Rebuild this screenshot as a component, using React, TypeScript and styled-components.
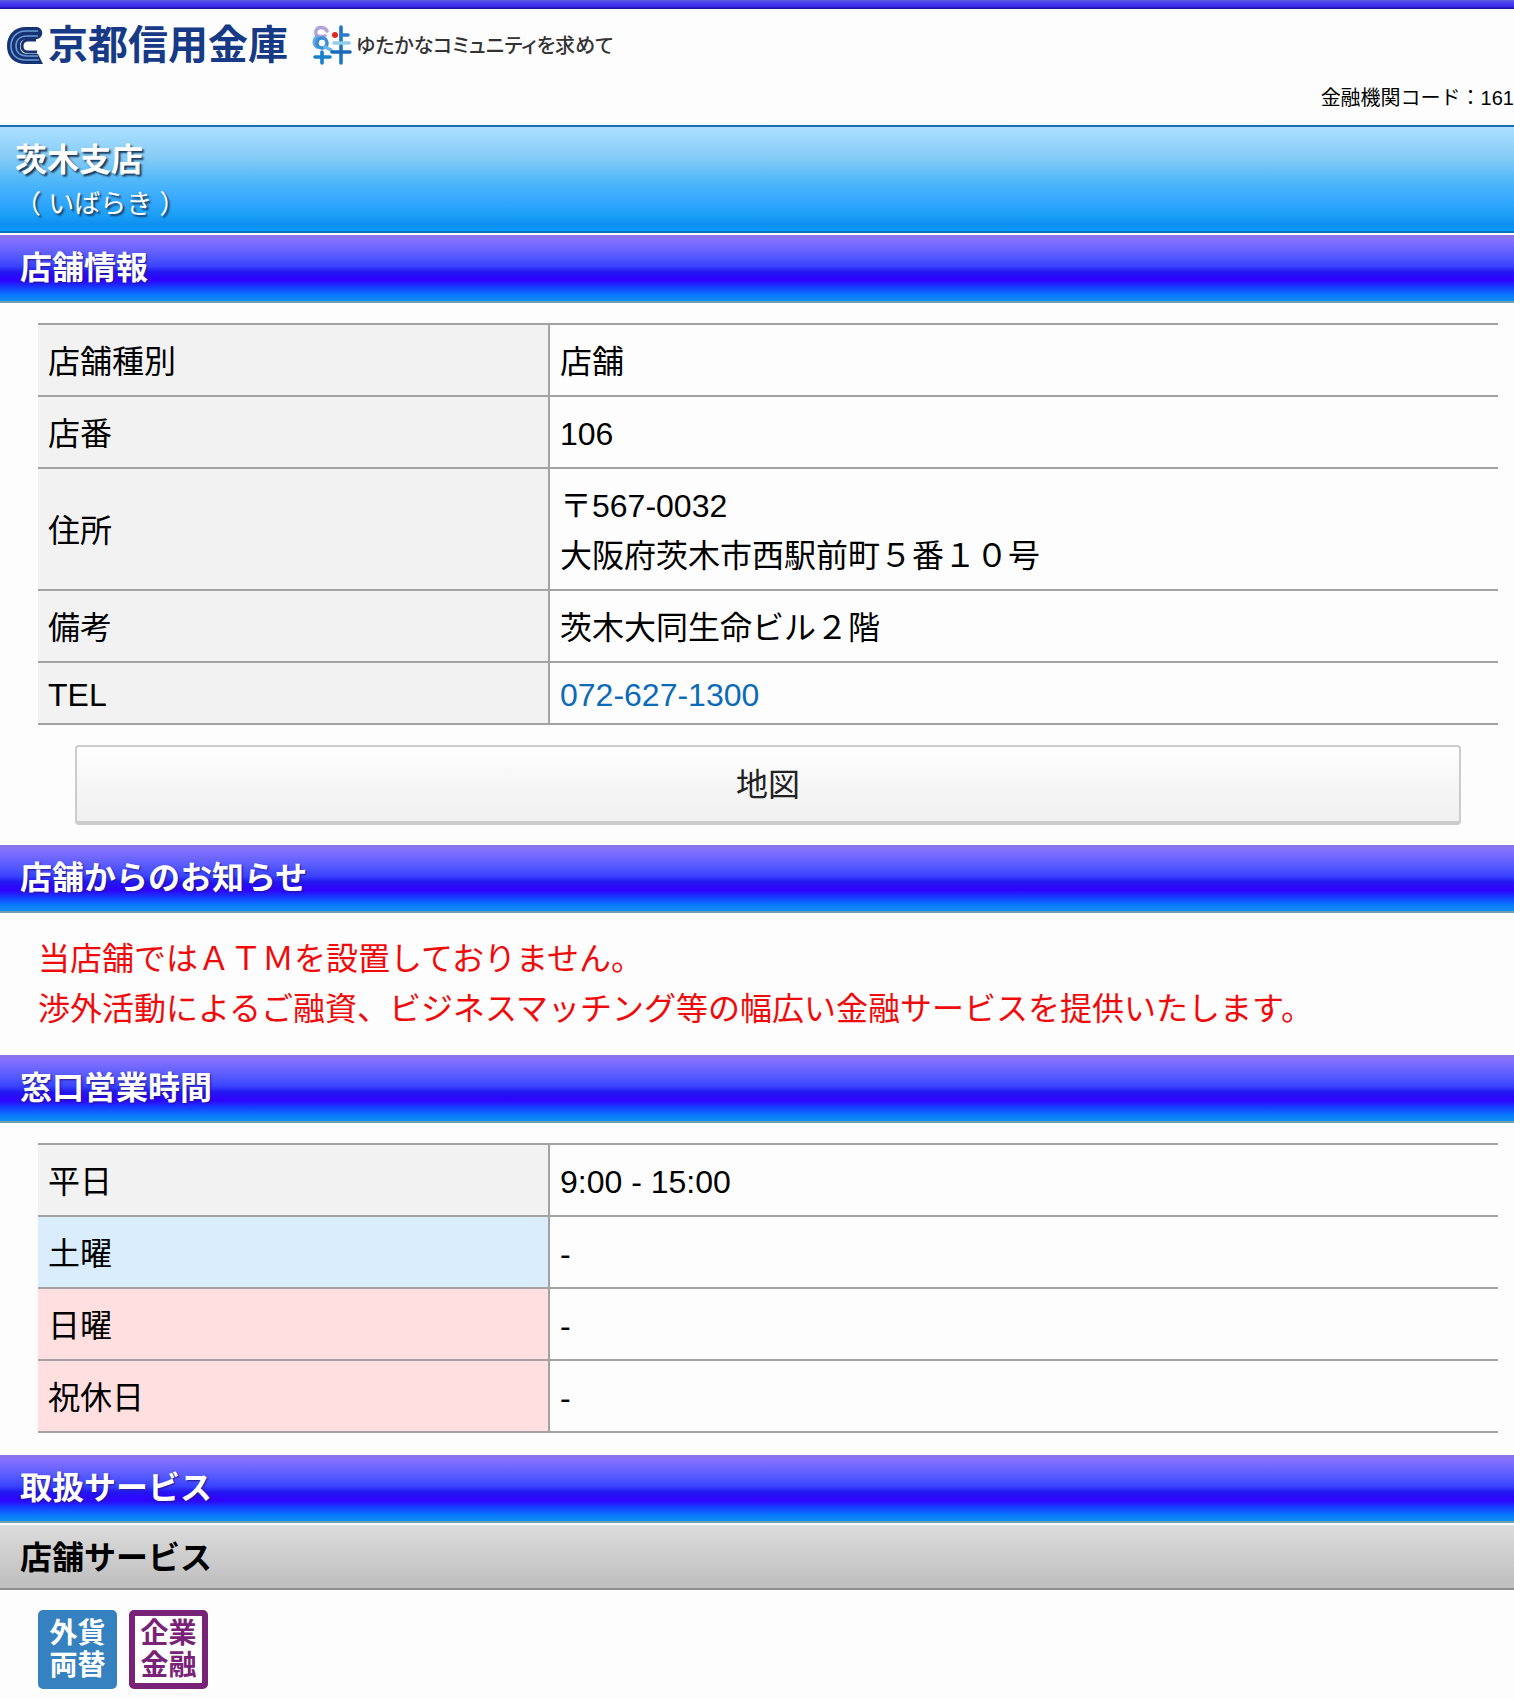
import React from "react";
import styled, { createGlobalStyle } from "styled-components";

const GlobalStyle = createGlobalStyle`
  *, *::before, *::after { box-sizing: border-box; }
  body {
    margin: 0;
    background: #fdfdfd;
    color: #000;
    font-family: "Liberation Sans", "Noto Sans CJK JP", sans-serif;
    font-size: 32px;
    line-height: 50px;
    overflow-x: hidden;
  }
`;

const TopStripe = styled.div`
  height: 9px;
  background: linear-gradient(#5a62d8, #4a3cf0 35%, #3c2cf0 70%, #1c0c96);
`;

const Header = styled.header`
  display: flex;
  flex-direction: column;
  padding-top: 12px;
`;

const Brand = styled.div`
  display: flex;
  align-items: center;
  height: 48px;
  padding-left: 6px;
`;

const BankMark = styled.svg`
  width: 38px;
  height: 40px;
  margin-right: 4px;
`;

const BankName = styled.span`
  color: #173a86;
  font-size: 40px;
  font-weight: 700;
`;

const KizunaMark = styled.svg`
  width: 40px;
  height: 40px;
  margin: 0 4px 0 24px;
`;

const Slogan = styled.span`
  padding-top: 2px;
  color: #333;
  font-size: 20px;
  font-weight: 500;
  font-feature-settings: "palt";
`;

const BankCode = styled.p`
  margin: 0;
  padding: 14px 0 12px;
  font-size: 20px;
  line-height: 30px;
  text-align: right;
  white-space: nowrap;
`;

const BranchBanner = styled.div`
  height: 108px;
  padding: 9px 15px 0;
  border-top: 2px solid #1d6bb0;
  border-bottom: 2px solid #0b74c0;
  background: linear-gradient(#ade0ff, #84cbf6 30%, #50b8f8 52%, #3aaaff 68%, #1a9ff5 85%, #0e8ff0 94%, #0098ff);
  color: #fff;
  text-shadow: 2px 2px 2px #1a3a5c;
`;

const BranchName = styled.h1`
  margin: 0;
  font-size: 32px;
  line-height: 48px;
`;

const BranchKana = styled.p`
  margin: 0;
  font-size: 26px;
  line-height: 40px;
`;

const SectionTitle = styled.h2<{ $spaced?: boolean }>`
  height: 68px;
  margin: ${(p) => (p.$spaced ? 20 : 2)}px 0 0;
  padding: 8px 20px 0;
  border-bottom: 2px solid #6f9fb4;
  background: linear-gradient(#8c78e0, #8470ff 8%, #5a5cff 30%, #3a44ff 47%, #2218f0 56%, #3000ff 68%, #1440ff 80%, #0a78ff 91%, #1090f0);
  color: #fff;
  font-size: 32px;
  line-height: 50px;
  text-shadow: 1px 1px 2px #22168c;
`;

const SubTitle = styled.h3`
  height: 65px;
  margin: 2px 0 0;
  padding: 8px 20px 0;
  border-bottom: 2px solid #909090;
  background: linear-gradient(#dcdcdc, #bebebe);
  font-size: 32px;
  line-height: 50px;
`;

const Panel = styled.section<{ $bottom?: number }>`
  padding: 20px 16px ${(p) => p.$bottom ?? 0}px 38px;
`;

const InfoTable = styled.table`
  width: 100%;
  table-layout: fixed;
  border-collapse: collapse;
`;

const Row = styled.tr<{ $compact?: boolean }>`
  line-height: ${(p) => (p.$compact ? 40 : 50)}px;
  border-top: 2px solid #a3a3a3;
  border-bottom: 2px solid #a3a3a3;
`;

const tones = { plain: "#f2f2f2", saturday: "#d9edfc", holiday: "#ffdfdf" };

const HeadCell = styled.th<{ $tone: keyof typeof tones }>`
  width: 35%;
  padding: 12px 10px 8px;
  border-right: 2px solid #a3a3a3;
  background: ${(p) => tones[p.$tone]};
  font-weight: 400;
  text-align: left;
`;

const DataCell = styled.td`
  padding: 12px 10px 8px;
`;

const PhoneLink = styled.a`
  color: #0b6bb8;
  text-decoration: none;
`;

const MapButton = styled.button`
  display: block;
  width: calc(100% - 74px);
  height: 80px;
  margin: 20px 37px 0;
  padding: 2px 0 0;
  border: 2px solid #ccc;
  border-bottom-width: 4px;
  border-radius: 4px;
  background: linear-gradient(#fff, #f7f7f7 45%, #f0f0f0);
  color: #222;
  font: inherit;
`;

const Notice = styled.p`
  margin: 0;
  padding: 21px 16px 1px 38px;
  color: #f00b0b;
`;

const Badges = styled.ul`
  display: flex;
  gap: 12px;
  margin: 0;
  padding: 20px 38px 10px;
  list-style: none;
`;

const Badge = styled.li<{ $outlined?: boolean }>`
  display: flex;
  flex-direction: column;
  align-items: center;
  justify-content: center;
  width: 79px;
  height: 79px;
  border: 6px solid ${(p) => (p.$outlined ? "#792378" : "#3682c0")};
  border-radius: 5px;
  background: ${(p) => (p.$outlined ? "#fff" : "#3682c0")};
  color: ${(p) => (p.$outlined ? "#792378" : "#fff")};
  font-size: 28px;
  font-weight: 700;
  line-height: 32px;
`;

type Entry = {
  label: string;
  value: React.ReactNode;
  tone?: keyof typeof tones;
  compact?: boolean;
};

const branchInfo: Entry[] = [
  { label: "店舗種別", value: "店舗" },
  { label: "店番", value: "106" },
  { label: "住所", value: <>〒567-0032<br />大阪府茨木市西駅前町５番１０号</> },
  { label: "備考", value: "茨木大同生命ビル２階" },
  { label: "TEL", value: <PhoneLink href="tel:0726271300">072-627-1300</PhoneLink>, compact: true },
];

const hours: Entry[] = [
  { label: "平日", value: "9:00 - 15:00" },
  { label: "土曜", value: "-", tone: "saturday" },
  { label: "日曜", value: "-", tone: "holiday" },
  { label: "祝休日", value: "-", tone: "holiday" },
];

function EntryTable({ entries }: { entries: Entry[] }) {
  return (
    <InfoTable>
      <tbody>
        {entries.map((e) => (
          <Row key={e.label} $compact={e.compact}>
            <HeadCell scope="row" $tone={e.tone ?? "plain"}>{e.label}</HeadCell>
            <DataCell>{e.value}</DataCell>
          </Row>
        ))}
      </tbody>
    </InfoTable>
  );
}

export default function App() {
  return (
    <>
      <GlobalStyle />
      <TopStripe />
      <Header>
        <Brand>
          <BankMark viewBox="0 0 38 40" aria-hidden="true">
            <path d="M31 2H20C8 2 1 10 1 21s7 18 19 18h17l-5-10H22c-6 0-8-4-8-8s2-7 8-7h9c7-1 7-11 0-12Z" fill="#163474" />
            <path d="M30 15H22c-4 0-6 3-6 6s2 6 6 6h9" fill="none" stroke="#163474" strokeWidth="3" />
            <g fill="none" stroke="#6b9bd6" strokeWidth="1.6">
              <path d="M32 6H20C10 6 5 13 5 21s5 14 15 14h13" />
              <path d="M32 11H21c-7 0-11 4-11 10s4 10 11 10h11" />
            </g>
          </BankMark>
          <BankName>京都信用金庫</BankName>
          <KizunaMark viewBox="0 0 40 40" aria-hidden="true">
            <g fill="none" strokeWidth="3.6" strokeLinecap="round">
              <path d="M15 6C12 0 2 2 4 9c1 3 5 3 9 2" stroke="#b3a5dc" />
              <path d="M5 12C1 15 2 20 5 22" stroke="#65a9de" />
              <circle cx="10" cy="18" r="5" stroke="#3b8ed3" />
              <path d="M13 22L19 25" stroke="#67b8e7" />
              <path d="M3 32h15M10 27v11" stroke="#1680cf" />
              <path d="M29 2v36" stroke="#1c75bd" />
              <path d="M29 10h7" stroke="#2d79c8" />
              <path d="M22 18h15" stroke="#8fcdeb" />
              <path d="M20 27h18" stroke="#176bb6" />
            </g>
            <circle cx="23" cy="10" r="3" fill="#e6281e" />
          </KizunaMark>
          <Slogan>ゆたかなコミュニティを求めて</Slogan>
        </Brand>
        <BankCode>金融機関コード：161</BankCode>
      </Header>
      <main>
        <BranchBanner>
          <BranchName>茨木支店</BranchName>
          <BranchKana>（ いばらき ）</BranchKana>
        </BranchBanner>

        <SectionTitle>店舗情報</SectionTitle>
        <Panel>
          <EntryTable entries={branchInfo} />
          <MapButton type="button">地図</MapButton>
        </Panel>

        <SectionTitle $spaced>店舗からのお知らせ</SectionTitle>
        <Notice>
          当店舗ではＡＴＭを設置しておりません。
          <br />
          渉外活動によるご融資、ビジネスマッチング等の幅広い金融サービスを提供いたします。
        </Notice>

        <SectionTitle $spaced>窓口営業時間</SectionTitle>
        <Panel $bottom={2}>
          <EntryTable entries={hours} />
        </Panel>

        <SectionTitle $spaced>取扱サービス</SectionTitle>
        <SubTitle>店舗サービス</SubTitle>
        <Badges>
          <Badge>
            <span>外貨</span>
            <span>両替</span>
          </Badge>
          <Badge $outlined>
            <span>企業</span>
            <span>金融</span>
          </Badge>
        </Badges>
      </main>
    </>
  );
}
